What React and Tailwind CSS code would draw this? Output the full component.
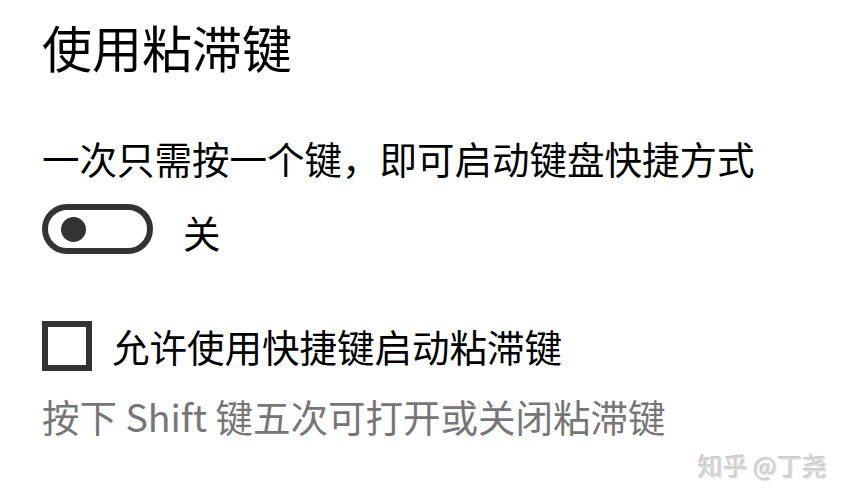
import React from "react";

export default function App() {
  return (
    <div
      className="relative w-[854px] h-[500px] bg-white overflow-hidden text-black"
      style={{ fontFamily: '"Noto Sans CJK SC", "Noto Sans", sans-serif' }}
    >
      <div className="flex flex-col pl-[42px] pt-[15px]">
        <div className="text-[50px] leading-[62px] h-[62px]">使用粘滞键</div>
        <div className="mt-[58px] text-[37.5px] leading-[46px] h-[46px]">
          一次只需按一个键，即可启动键盘快捷方式
        </div>
        <div className="mt-[22px] flex items-center gap-[30px]">
          <div className="w-[111px] h-[50px] rounded-full border-[6px] border-[#333333] flex items-center pl-[13px]">
            <div className="w-[25px] h-[25px] rounded-full bg-[#333333]" />
          </div>
          <div className="text-[37.5px] leading-[46px] pt-[6px]">关</div>
        </div>
        <div className="mt-[66px] flex items-center gap-[20px]">
          <div className="w-[50px] h-[50px] border-[6px] border-[#333333]" />
          <div className="text-[37.5px] leading-[46px]">允许使用快捷键启动粘滞键</div>
        </div>
        <div className="mt-[22px] text-[37.5px] leading-[46px] text-[#767676]">
          按下 Shift 键五次可打开或关闭粘滞键
        </div>
      </div>
      <div className="absolute left-[698px] top-[449px] text-[25px] leading-[32px] text-[#d4d4d4] [text-shadow:1px_1px_0_#f0f0f0,-1px_-1px_0_#c8c8c8]">
        知乎 @丁尧
      </div>
    </div>
  );
}
